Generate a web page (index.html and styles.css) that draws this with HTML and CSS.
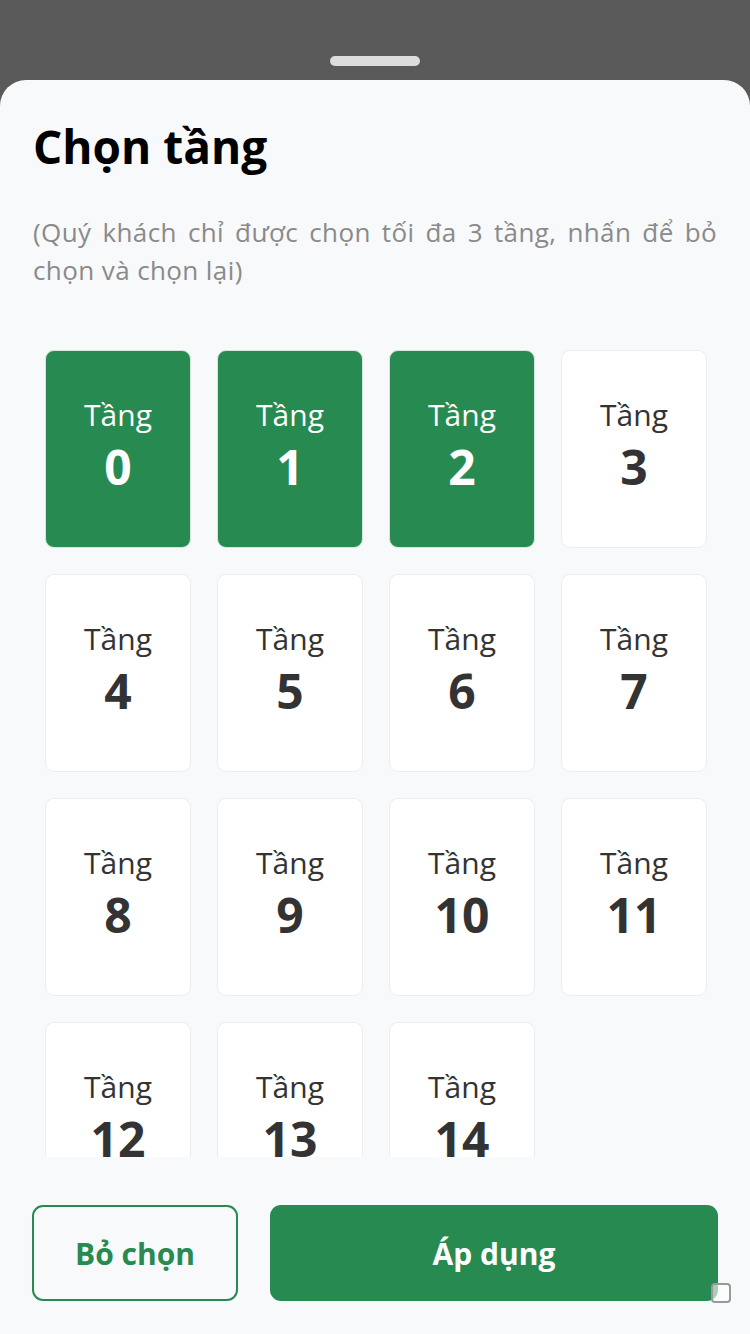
FILE: index.html
```html
<!DOCTYPE html>
<html lang="vi">
<head>
<meta charset="utf-8">
<title>Chọn tầng</title>
<link rel="stylesheet" href="styles.css">
</head>
<body>
<div class="screen">
  <div class="backdrop">
    <div class="handle"></div>
  </div>
  <div class="sheet">
    <h1 class="title">Chọn tầng</h1>
    <p class="hint">(Quý khách chỉ được chọn tối đa 3 tầng, nhấn để bỏ chọn và chọn lại)</p>
    <div class="scroll">
      <div class="grid">
        <div class="floor selected"><span class="label">Tầng</span><span class="num">0</span></div>
        <div class="floor selected"><span class="label">Tầng</span><span class="num">1</span></div>
        <div class="floor selected"><span class="label">Tầng</span><span class="num">2</span></div>
        <div class="floor"><span class="label">Tầng</span><span class="num">3</span></div>
        <div class="floor"><span class="label">Tầng</span><span class="num">4</span></div>
        <div class="floor"><span class="label">Tầng</span><span class="num">5</span></div>
        <div class="floor"><span class="label">Tầng</span><span class="num">6</span></div>
        <div class="floor"><span class="label">Tầng</span><span class="num">7</span></div>
        <div class="floor"><span class="label">Tầng</span><span class="num">8</span></div>
        <div class="floor"><span class="label">Tầng</span><span class="num">9</span></div>
        <div class="floor"><span class="label">Tầng</span><span class="num">10</span></div>
        <div class="floor"><span class="label">Tầng</span><span class="num">11</span></div>
        <div class="floor"><span class="label">Tầng</span><span class="num">12</span></div>
        <div class="floor"><span class="label">Tầng</span><span class="num">13</span></div>
        <div class="floor"><span class="label">Tầng</span><span class="num">14</span></div>
      </div>
    </div>
    <div class="footer">
      <button class="btn btn-outline">Bỏ chọn</button>
      <button class="btn btn-primary">Áp dụng</button>
    </div>
    <div class="corner-box"></div>
  </div>
</div>
</body>
</html>
```

FILE: styles.css
```css
* { box-sizing: border-box; }
html, body {
  margin: 0;
  padding: 0;
  width: 750px;
  height: 1334px;
  overflow: hidden;
  background: #5a5a5a;
  font-family: "Open Sans", "Noto Sans", sans-serif;
}
.screen {
  width: 750px;
  height: 1334px;
  display: flex;
  flex-direction: column;
}
.backdrop {
  height: 80px;
  flex: none;
  display: flex;
  justify-content: center;
  padding-top: 56px;
}
.handle {
  width: 90px;
  height: 10px;
  border-radius: 5px;
  background: #dddddd;
}
.sheet {
  position: relative;
  flex: 1;
  background: #f8f9fb;
  border-radius: 26px 26px 0 0;
  display: flex;
  flex-direction: column;
}
.title {
  margin: 36px 0 0 33px;
  font-size: 46px;
  line-height: 60px;
  font-weight: 700;
  color: #000;
}
.hint {
  margin: 37px 33px 0 33px;
  font-size: 26px;
  line-height: 38px;
  letter-spacing: 0.4px;
  color: #8a8a8a;
  text-align: justify;
}
.scroll {
  margin-top: 61px;
  height: 807px;
  overflow: hidden;
  flex: none;
}
.grid {
  display: grid;
  grid-template-columns: repeat(4, 146px);
  grid-auto-rows: 198px;
  column-gap: 26px;
  row-gap: 26px;
  padding-left: 45px;
}
.floor {
  background: #fff;
  border: 1.5px solid #eceef0;
  border-radius: 9px;
  display: flex;
  flex-direction: column;
  align-items: center;
  justify-content: center;
  padding-bottom: 4px;
  color: #333;
}
.floor.selected {
  background: #278a51;
  border-color: #d6e8dc;
  color: #fff;
}
.label {
  font-size: 30px;
  line-height: 40px;
}
.num {
  font-size: 48px;
  line-height: 64px;
  font-weight: 700;
}
.footer {
  display: flex;
  gap: 32px;
  padding: 0 32px;
  margin-top: 48px;
}
.btn {
  height: 96px;
  border-radius: 11px;
  font-family: inherit;
  font-size: 30px;
  font-weight: 700;
  cursor: pointer;
}
.btn-outline {
  width: 206px;
  background: transparent;
  border: 2px solid #278a51;
  color: #278a51;
}
.btn-primary {
  flex: 1;
  background: #278a51;
  border: none;
  color: #fff;
}
.corner-box {
  position: absolute;
  left: 711px;
  top: 1203px;
  width: 20px;
  height: 20px;
  border: 2px solid #999;
  border-radius: 4px;
  background: rgba(255,255,255,0.6);
}
```
